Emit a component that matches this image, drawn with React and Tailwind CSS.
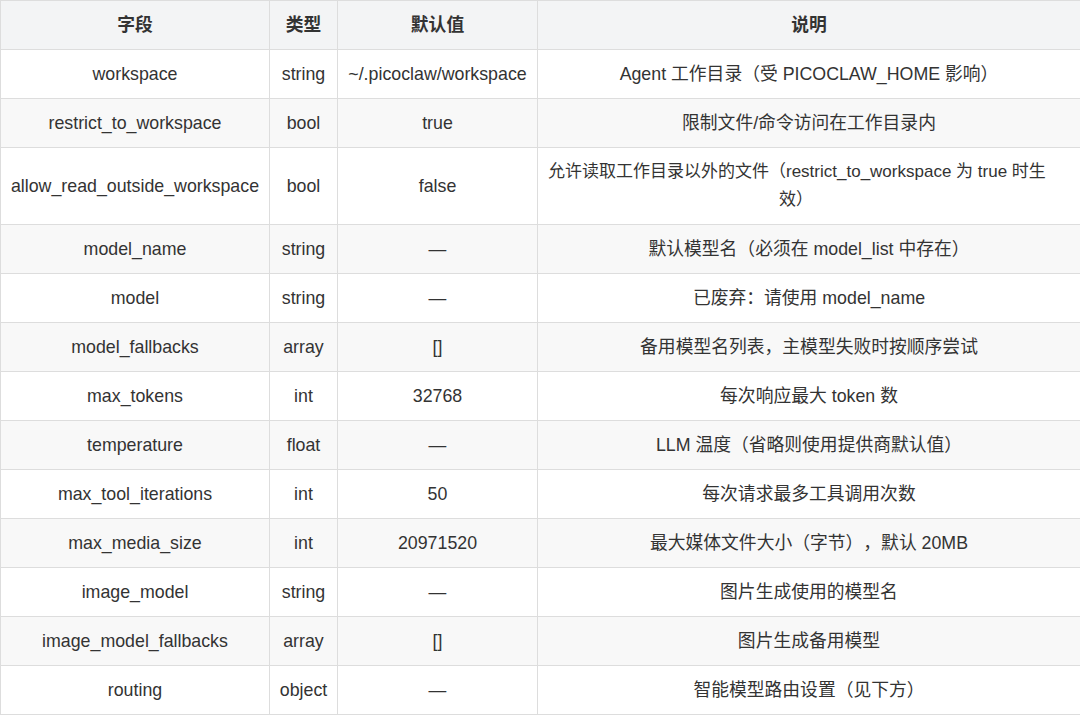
import React from "react";

const rows = [
  ["workspace", "string", "~/.picoclaw/workspace", "Agent 工作目录（受 PICOCLAW_HOME 影响）"],
  ["restrict_to_workspace", "bool", "true", "限制文件/命令访问在工作目录内"],
  ["allow_read_outside_workspace", "bool", "false", null],
  ["model_name", "string", "—", "默认模型名（必须在 model_list 中存在）"],
  ["model", "string", "—", "已废弃：请使用 model_name"],
  ["model_fallbacks", "array", "[]", "备用模型名列表，主模型失败时按顺序尝试"],
  ["max_tokens", "int", "32768", "每次响应最大 token 数"],
  ["temperature", "float", "—", "LLM 温度（省略则使用提供商默认值）"],
  ["max_tool_iterations", "int", "50", "每次请求最多工具调用次数"],
  ["max_media_size", "int", "20971520", "最大媒体文件大小（字节），默认 20MB"],
  ["image_model", "string", "—", "图片生成使用的模型名"],
  ["image_model_fallbacks", "array", "[]", "图片生成备用模型"],
  ["routing", "object", "—", "智能模型路由设置（见下方）"],
];

export default function App() {
  return (
    <div
      className="w-[1080px] h-[715px] overflow-hidden bg-white text-[#333333] [text-spacing-trim:space-all]"
      style={{ fontFamily: '"Liberation Sans", Arial, "Noto Sans CJK SC", sans-serif' }}
    >
      <table className="w-[1080px] table-fixed border-collapse text-[17.8px] leading-[28px]">
        <colgroup>
          <col className="w-[269px]" />
          <col className="w-[68px]" />
          <col className="w-[200px]" />
          <col className="w-[543px]" />
        </colgroup>
        <thead>
          <tr className="bg-[#f3f4f5]">
            {["字段", "类型", "默认值", "说明"].map((h) => (
              <th
                key={h}
                className="border border-[#dddddd] h-[49px] px-[10px] py-0 text-center font-bold text-[#333333]"
              >
                {h}
              </th>
            ))}
          </tr>
        </thead>
        <tbody>
          {rows.map((r, i) => (
            <tr key={r[0]} className={i % 2 === 1 ? "bg-[#f8f8f8]" : "bg-white"}>
              <td className="border border-[#dddddd] px-[4px] py-0 text-center whitespace-nowrap h-[49px]">{r[0]}</td>
              <td className="border border-[#dddddd] px-[4px] py-0 text-center whitespace-nowrap">{r[1]}</td>
              <td className="border border-[#dddddd] px-[4px] py-0 text-center whitespace-nowrap">{r[2]}</td>
              {r[3] === null ? (
                <td className="border border-[#dddddd] pl-[10px] pr-[36px] py-[10px] text-center whitespace-nowrap h-[76px] text-[17px]">
                  允许读取工作目录以外的文件（restrict_to_workspace 为 true 时生
                  <br />
                  效）
                </td>
              ) : (
                <td className="border border-[#dddddd] px-[6px] py-0 text-center whitespace-nowrap">{r[3]}</td>
              )}
            </tr>
          ))}
        </tbody>
      </table>
    </div>
  );
}
